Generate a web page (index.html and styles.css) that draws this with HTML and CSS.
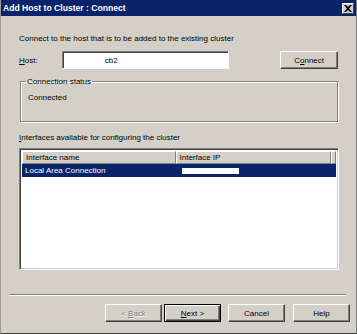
FILE: index.html
```html
<!DOCTYPE html>
<html lang="en">
<head>
    <meta charset="UTF-8">
    <title>Add Host to Cluster : Connect</title>
    <link rel="stylesheet" href="styles.css">
</head>
<body>
    <div class="window">
        <div class="titlebar">
            <span class="title">Add Host to Cluster : Connect</span>
            <span class="close-btn">
                <svg width="8" height="7" viewBox="0 0 8 7"><path d="M0 0h2l2 2 2-2h2l-3 3.5 3 3.5h-2l-2-2-2 2h-2l3-3.5z" fill="#000"/></svg>
            </span>
        </div>
        <div class="page">
            <p class="intro">Connect to the host that is to be added to the existing cluster</p>
            <div class="host-row">
                <label class="host-label" for="host"><u>H</u>ost:</label>
                <div class="field" id="host"><span class="field-text">cb2</span></div>
                <button class="btn connect-btn">C<u>o</u>nnect</button>
            </div>
            <fieldset class="group">
                <legend>Connection status</legend>
                <div class="status">Connected</div>
            </fieldset>
            <p class="list-caption"><u>I</u>nterfaces available for configuring the cluster</p>
            <div class="listview">
                <div class="list-head">
                    <div class="col col-name">Interface name</div>
                    <div class="col col-ip">Interface IP</div>
                    <div class="col col-rest"></div>
                </div>
                <div class="list-row selected">
                    <div class="cell cell-name">Local Area Connection</div>
                    <div class="cell cell-ip"><span class="redacted"></span></div>
                </div>
            </div>
        </div>
        <div class="separator"></div>
        <div class="buttons">
            <button class="btn back-btn" disabled>&lt; <u>B</u>ack</button>
            <button class="btn next-btn"><u>N</u>ext &gt;</button>
            <button class="btn cancel-btn">Cancel</button>
            <button class="btn help-btn">Help</button>
        </div>
    </div>
</body>
</html>
```

FILE: styles.css
```css
body { margin: 0; padding: 0; background: #d4d0c8; font-family: "Liberation Sans", Arial, sans-serif; font-size: 8px; color: #000; }
.window { width: 357px; height: 334px; box-sizing: border-box; background: #d4d0c8; border-left: 1px solid #a09c94; border-right: 1px solid #808080; border-bottom: 1px solid #404040; }
.titlebar { height: 16px; background: #0a246a; display: flex; align-items: center; justify-content: space-between; padding: 0 2px 0 2px; }
.title { color: #fff; font-weight: bold; font-size: 8.6px; }
.close-btn { width: 12px; height: 11px; box-sizing: border-box; background: #d4d0c8; border: 1px solid; border-color: #fff #404040 #404040 #fff; display: flex; align-items: center; justify-content: center; }
.page { padding: 0 18px 0 18px; }
.intro { margin: 16px 0 0 0; line-height: 13px; }
.host-row { display: flex; align-items: center; margin-top: 6px; height: 18px; }
.host-label { width: 43px; }
.field { width: 168px; height: 18px; box-sizing: border-box; background: #fff; border: 1px solid; border-color: #808080 #fff #fff #808080; box-shadow: inset 1px 1px 0 #404040; display: flex; align-items: center; }
.field-text { margin-left: 42px; }
.btn { font-family: "Liberation Sans", Arial, sans-serif; font-size: 8px; color: #000; width: 57px; height: 18px; padding: 0; background: #d4d0c8; border: 1px solid; border-color: #fff #404040 #404040 #fff; box-shadow: inset -1px -1px 0 #808080; }
.connect-btn { margin-left: 51px; width: 58px; }
.group { margin: 6px 0 0 1px; padding: 3px 6px 0 7px; height: 47px; box-sizing: border-box; width: 318px; border: 1px solid #808080; box-shadow: 1px 1px 0 #fff, inset 1px 1px 0 #fff; }
.group legend { padding: 0 1px; margin-left: -2px; line-height: 13px; }
.status { line-height: 13px; }
.list-caption { margin: 9px 0 0 0; line-height: 13px; }
.listview { margin: 4px 0 0 0; width: 320px; height: 122px; box-sizing: border-box; background: #fff; border: 1px solid; border-color: #808080 #fff #fff #808080; box-shadow: inset 1px 1px 0 #404040, inset -1px -1px 0 #d4d0c8; padding: 2px 2px 0 2px; }
.list-head { display: flex; height: 13px; }
.col { box-sizing: border-box; background: #d4d0c8; border: 1px solid; border-color: #fff #808080 #808080 #fff; line-height: 11px; padding-left: 3px; }
.col-name { width: 157px; }
.col-ip { width: 159px; }
.col-rest { flex: 1; }
.list-row { display: flex; height: 13px; line-height: 13px; }
.list-row.selected { background: #0a246a; color: #fff; }
.cell-name { width: 157px; padding-left: 3px; box-sizing: border-box; }
.cell-ip { padding-left: 3px; display: flex; align-items: center; }
.redacted { display: block; width: 57px; height: 6px; background: #fff; }
.separator { margin: 24px 10px 0 8px; height: 1px; background: #808080; border-bottom: 1px solid #fff; }
.buttons { display: flex; margin: 8px 0 0 104px; }
.back-btn { color: #808080; text-shadow: 1px 1px 0 #fff; }
.next-btn { margin-left: 2px; border: 1px solid #000; box-shadow: inset 1px 1px 0 #fff, inset -1px -1px 0 #404040, inset -2px -2px 0 #808080; }
.cancel-btn { margin-left: 7px; }
.help-btn { margin-left: 8px; }
```
